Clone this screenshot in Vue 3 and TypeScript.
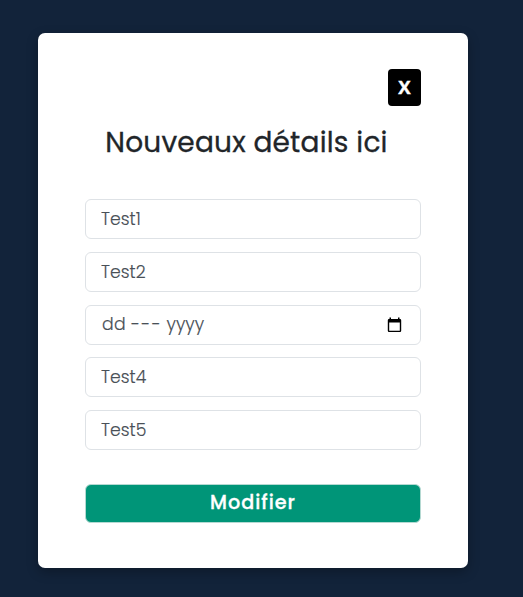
<script setup lang="ts">
import { ref } from 'vue'

interface Field {
  id: number
  kind: 'text' | 'date'
  value: string
}

const fields = ref<Field[]>([
  { id: 1, kind: 'text', value: 'Test1' },
  { id: 2, kind: 'text', value: 'Test2' },
  { id: 3, kind: 'date', value: '' },
  { id: 4, kind: 'text', value: 'Test4' },
  { id: 5, kind: 'text', value: 'Test5' },
])
const dateParts: string[] = ['dd', '---', 'yyyy']
</script>

<template>
  <main class="page">
    <form class="card" @submit.prevent>
      <button type="button" class="close">X</button>
      <h1 class="title">Nouveaux détails ici</h1>
      <div class="fields">
        <template v-for="field in fields" :key="field.id">
          <input v-if="field.kind === 'text'" v-model="field.value" class="field" type="text" />
          <div v-else class="field date">
            <span v-for="part in dateParts" :key="part" :class="'part-' + (part === '---' ? 'month' : part)">{{ part }}</span>
            <svg class="calendar" width="15" height="16" viewBox="0 0 15 16">
              <path fill="#000" fill-rule="evenodd" d="M2.500 0.500h1.500v1.500h7V0.500h1.500v1.500h.5a1.200 1.200 0 0 1 1.200 1.200v10.600a1.200 1.200 0 0 1-1.200 1.200h-11a1.200 1.200 0 0 1-1.200-1.200V3.200A1.200 1.200 0 0 1 2 2h.5zM2.200 5.600v8.100h10.600V5.600z" />
            </svg>
          </div>
        </template>
      </div>
      <button type="submit" class="submit">Modifier</button>
    </form>
  </main>
</template>

<style>
body {
  background: #12233a;
}
</style>

<style scoped>
.page {
  box-sizing: border-box;
  height: 597px;
  padding: 33px 55px 0 38px;
  background: #12233a;
  font-family: Poppins, "Open Sans", sans-serif;
}
.card {
  box-sizing: border-box;
  display: flex;
  flex-direction: column;
  width: 430px;
  height: 535.4px;
  padding: 36px 47px 0;
  border-radius: 7px;
  background: #fff;
  box-shadow: 0 4px 12px rgba(0, 0, 0, 0.28);
}
.close {
  align-self: flex-end;
  width: 33px;
  height: 37px;
  padding: 0 0 2px;
  border: 0;
  border-radius: 4px;
  background: #000;
  color: #fff;
  font: 700 18.5px/35px "Open Sans", sans-serif;
  -webkit-text-stroke: 0.4px #fff;
}
.title {
  margin: 16px 13px 0 0;
  color: #212529;
  font-size: 28px;
  font-weight: 400;
  -webkit-text-stroke: 0.3px #212529;
  line-height: 42px;
  text-align: center;
  white-space: nowrap;
  letter-spacing: 0.2px;
}
.fields {
  display: flex;
  flex-direction: column;
  gap: 12.75px;
  margin-top: 35px;
}
.field {
  box-sizing: border-box;
  width: 336px;
  height: 40px;
  padding: 0 15px;
  border: 1px solid #dee2e6;
  border-radius: 6px;
  background: #fff;
  color: #495057;
  font-family: inherit;
  font-size: 17.25px;
  font-weight: 300;
  -webkit-text-stroke: 0.15px #495057;
  line-height: 38px;
  outline: none;
}
.date {
  display: flex;
  align-items: center;
  padding-left: 16px;
  padding-right: 18px;
  line-height: 36px;
}
.date span {
  height: 38px;
}
.part-dd {
  width: 29px;
  letter-spacing: 0.3px;
}
.part-month {
  width: 35.5px;
  letter-spacing: 1.4px;
}
.calendar {
  margin-left: auto;
}
.submit {
  box-sizing: border-box;
  width: 336px;
  height: 39px;
  margin-top: 34px;
  padding: 0 0 2px;
  border: 1px solid #b5d9d2;
  border-radius: 6px;
  background: #009578;
  color: #fff;
  font-family: inherit;
  font-size: 19.2px;
  font-weight: 500;
  -webkit-text-stroke: 0.3px #fff;
  line-height: 35px;
  letter-spacing: 1px;
}
</style>
